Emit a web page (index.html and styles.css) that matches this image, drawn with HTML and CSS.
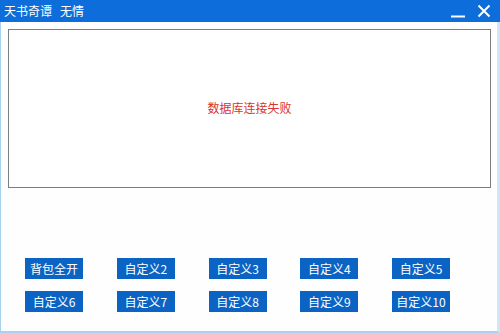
FILE: index.html
```html
<!DOCTYPE html>
<html lang="zh-CN">
<head>
    <meta charset="UTF-8">
    <title>天书奇谭 无情</title>
    <link rel="stylesheet" href="styles.css">
</head>
<body>
    <div class="window">
        <!-- 标题栏 -->
        <div class="title-bar">
            <span class="title">天书奇谭<span class="role">无情</span></span>
            <div class="controls">
                <svg class="ctl" width="16" height="16" viewBox="0 0 16 16">
                    <path d="M1 13.5H15" stroke="#fff" stroke-width="2"/>
                </svg>
                <svg class="ctl" width="16" height="16" viewBox="0 0 16 16">
                    <path d="M2.5 2.5L13.5 13.5M13.5 2.5L2.5 13.5" stroke="#fff" stroke-width="2"/>
                </svg>
            </div>
        </div>

        <div class="content">
            <!-- 信息框 -->
            <div class="message-box">
                <span class="error">数据库连接失败</span>
            </div>

            <!-- 按钮区 -->
            <div class="buttons">
                <button class="btn">背包全开</button>
                <button class="btn">自定义2</button>
                <button class="btn">自定义3</button>
                <button class="btn">自定义4</button>
                <button class="btn">自定义5</button>
                <button class="btn">自定义6</button>
                <button class="btn">自定义7</button>
                <button class="btn">自定义8</button>
                <button class="btn">自定义9</button>
                <button class="btn">自定义10</button>
            </div>
        </div>
    </div>
</body>
</html>
```

FILE: styles.css
```css
html, body {
    margin: 0;
    padding: 0;
    width: 500px;
    height: 333px;
    overflow: hidden;
    background: #fff;
}
body {
    font-family: "Noto Sans CJK SC", "Liberation Sans", sans-serif;
    font-size: 12px;
}
.window {
    width: 500px;
    height: 333px;
    box-sizing: border-box;
    display: flex;
    flex-direction: column;
    border-left: 1px solid #a9d2ee;
    border-right: 3px solid #cfe6f6;
    border-bottom: 2px solid #a9d2ee;
    background: #fefefe;
}
.title-bar {
    height: 22px;
    margin-left: -1px;
    margin-right: -3px;
    background: #0c6ddb;
    color: #fff;
    display: flex;
    align-items: center;
    justify-content: space-between;
    padding: 0 8px 0 4px;
}
.title {
    font-size: 12px;
    line-height: 22px;
}
.role {
    margin-left: 8px;
}
.controls {
    display: flex;
    gap: 10px;
    align-items: center;
}
.ctl {
    display: block;
}
.content {
    flex: 1;
    display: flex;
    flex-direction: column;
    padding: 7px 6px 0 7px;
}
.message-box {
    height: 157px;
    border: 1px solid #7d7d7d;
    background: #fff;
    display: flex;
    align-items: center;
    justify-content: center;
}
.error {
    color: #d83232;
    font-size: 12px;
    margin-bottom: 2px;
}
.buttons {
    display: grid;
    grid-template-columns: repeat(5, 58px);
    column-gap: 33.75px;
    row-gap: 12px;
    margin-top: 70px;
    margin-left: 17px;
}
.btn {
    height: 21px;
    padding: 0;
    border: none;
    background: #0b64c4;
    color: #fff;
    font-family: "Noto Sans CJK SC", "Liberation Sans", sans-serif;
    font-size: 12px;
    cursor: pointer;
}
```
